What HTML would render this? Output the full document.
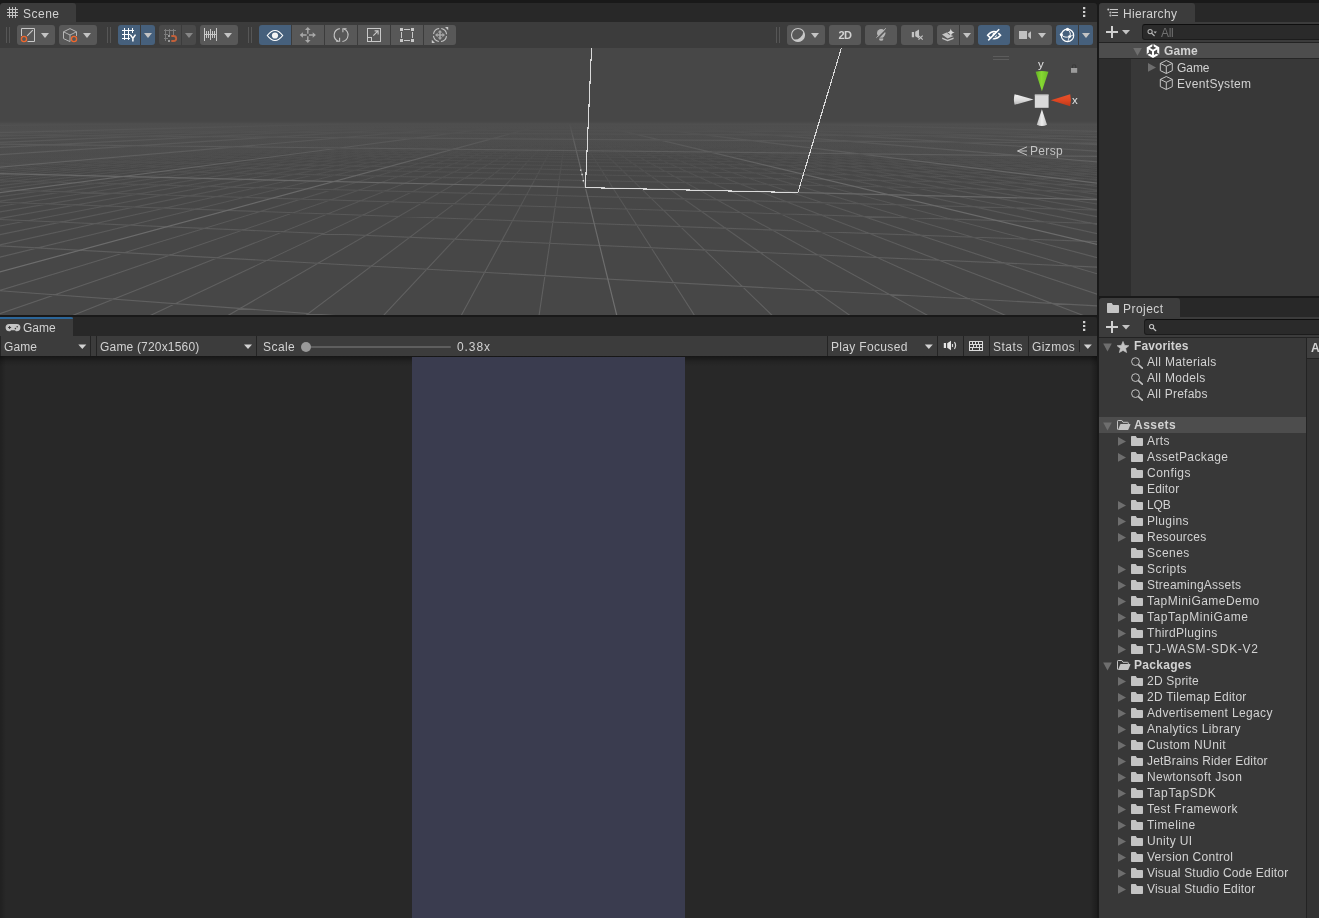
<!DOCTYPE html>
<html><head><meta charset="utf-8"><title>Unity</title>
<style>
*{box-sizing:border-box;margin:0;padding:0}
html,body{width:1319px;height:918px;overflow:hidden;background:#191919}
body{font-family:"Liberation Sans",sans-serif;font-size:12px;color:#d2d2d2;position:relative}
.abs,.p,.p>*,.t{position:absolute}
.p{overflow:hidden}
.tabbar{left:0;right:0;top:0;height:19px;background:#282828}
.tab{left:0;top:0;height:19px;background:#3c3c3c;border-radius:3px 3px 0 0}
.t{white-space:pre;line-height:16px;height:16px;will-change:transform}
.b{font-weight:bold}
.tb{background:#3c3c3c;left:0;right:0}
.btn{position:absolute;top:3px;height:20px;background:#585858;border-radius:3px}
.btn.on{background:#46607c}
.btn.l{border-radius:3px 0 0 3px}.btn.r{border-radius:0 3px 3px 0}.btn.m{border-radius:0}
.hd{position:absolute;width:1px;top:5px;height:16px;background:#565656}
svg{position:absolute;overflow:visible}
.row{position:absolute;left:0;height:16px}
.dots i{position:absolute;left:0;width:3px;height:2px;background:#c4c4c4}
</style></head>
<body>
<div class="p" style="left:0;top:3px;width:1097px;height:312px;border-radius:3px 3px 0 0">
<div class="tabbar"></div><div class="tab" style="width:76px"></div>
<svg width="12" height="12" viewBox="0 0 12 12" style="left:7px;top:4px" shape-rendering="crispEdges"><path d="M2.5 0v11M5.5 0v11M8.5 0v11M0 2.5h11M0 5.5h11M0 8.5h11" stroke="#c4c4c4" stroke-width="1" fill="none"/></svg>
<div class="t q " style="left:22.8px;top:3px;letter-spacing:0.491px;">Scene</div>
<svg width="4" height="12" viewBox="0 0 4 12" style="left:1083px;top:4px"><path d="M0 .1h2.3v2.2h-2.3zM0 3.9h2.3v2.2h-2.3zM0 7.8h2.3v2.2h-2.3z" fill="#d0d0d0"/></svg>
<div class="tb" style="top:19px;height:26px">
<div class="hd" style="left:6px"></div>
<div class="hd" style="left:9px"></div>
<div class="btn " style="left:17px;width:38px"></div>
<div class="btn " style="left:59px;width:38px"></div>
<div class="hd" style="left:107px"></div>
<div class="hd" style="left:110px"></div>
<div class="btn on l" style="left:118px;width:22px"></div>
<div class="btn on r" style="left:141px;width:14px"></div>
<div class="btn l" style="left:159px;width:22px;background:#4a4a4a"></div><div class="btn r" style="left:182px;width:14px;background:#4a4a4a"></div>
<div class="btn " style="left:200px;width:38px"></div>
<div class="hd" style="left:248px"></div>
<div class="hd" style="left:251px"></div>
<div class="btn on l" style="left:259px;width:32px"></div>
<div class="btn m" style="left:292px;width:32px"></div>
<div class="btn m" style="left:325px;width:32px"></div>
<div class="btn m" style="left:358px;width:32px"></div>
<div class="btn m" style="left:391px;width:32px"></div>
<div class="btn r" style="left:424px;width:32px"></div>
<div class="hd" style="left:776px"></div>
<div class="hd" style="left:779px"></div>
<div class="btn " style="left:787px;width:38px"></div>
<div class="btn " style="left:829px;width:32px"></div>
<div class="btn " style="left:865px;width:32px"></div>
<div class="btn " style="left:901px;width:32px"></div>
<div class="btn l" style="left:937px;width:22px"></div>
<div class="btn r" style="left:960px;width:14px"></div>
<div class="btn on" style="left:978px;width:32px"></div>
<div class="btn " style="left:1014px;width:38px"></div>
<div class="btn on l" style="left:1056px;width:22px"></div>
<div class="btn on r" style="left:1079px;width:14px"></div>
<div class="t b" style="left:829px;width:32px;top:4px;text-align:center;font-size:11px;letter-spacing:-.5px;color:#d2d2d2;line-height:18px;height:18px">2D</div>
<svg width="1097" height="25" viewBox="0 22 1097 25" style="left:0;top:0">
<path d="M21.5 36V28.5h13v13H27.5" stroke="#c8c8c8" fill="none"/>
<path d="M27.2 35.8L32.8 30.2" stroke="#c8c8c8" stroke-width="1.1" fill="none"/>
<circle cx="24" cy="39" r="2.6" stroke="#f0672d" stroke-width="1.3" fill="none"/>
<path d="M41 33h8l-4 5z" fill="#c4c4c4"/>
<path d="M63.5 31.8L70 28.6L76.5 31.8V36M63.5 31.8V38.6L70 41.6M63.5 31.8L70 35L76.5 31.8M70 35V41.6" stroke="#b4b4b4" stroke-width="1" fill="none" stroke-linejoin="round"/>
<circle cx="74" cy="39" r="2.6" stroke="#f0672d" stroke-width="1.3" fill="none"/>
<path d="M83 33h8l-4 5z" fill="#c4c4c4"/>
<g shape-rendering="crispEdges"><path d="M124.5 28v12M128.5 28v12M132.5 28v5M122 30.5h12M122 34.5h8M122 38.5h7.5" stroke="#fff" stroke-width="1" fill="none"/></g>
<path d="M130.3 34.6L132.9 38.4V41.6M135.5 34.6L132.9 38.4" stroke="#fff" stroke-width="1.5" fill="none"/>
<path d="M144 33h8l-4 5z" fill="#c4c4c4"/>
<g shape-rendering="crispEdges"><path d="M165.5 28.5v12M169.5 28.5v6M173.5 28.5v6M163.5 30.5h12M163.5 34.5h4M163.5 38.5h4" stroke="#7c7c7c" stroke-width="1" fill="none"/><path d="M168 35h2v2h-2zM168 40h2v2h-2z" fill="#9a9a9a"/></g>
<path d="M171.3 36h2.4a2.5 2.5 0 0 1 0 5h-2.4" stroke="#c2603a" stroke-width="1.8" fill="none"/>
<path d="M185 33h8l-4 5z" fill="#868686"/>
<g shape-rendering="crispEdges"><path d="M204.5 28v13M216.5 28v13M210.5 29v11M206.5 31v7M208.5 31v7M212.5 31v7M214.5 31v7M204 34.5h13" stroke="#c8c8c8" stroke-width="1" fill="none"/></g>
<path d="M224 33h8l-4 5z" fill="#c4c4c4"/>
<path d="M267.3 35.5Q275 25.5 282.7 35.5Q275 45.5 267.3 35.5Z" stroke="#fff" stroke-width="1.2" fill="none"/><circle cx="275" cy="35.5" r="3.1" fill="#f4f4f4"/>
<g fill="#a8a8a8"><path d="M307.8 26.9l2.8 3.2h-5.6zM307.8 43.1l2.8-3.2h-5.6zM299.7 35l3.2-2.8v5.6zM315.9 35l-3.2-2.8v5.6z"/><path d="M307.1 29.8h1.4v4h-1.4zM307.1 36.2h1.4v4h-1.4zM302.6 34.3h4v1.4h-4zM309 34.3h4v1.4h-4z"/></g>
<path d="M339.8 28.6A6.6 6.6 0 0 0 338.2 41.2M342.4 41.5A6.6 6.6 0 0 0 344 28.9" stroke="#c4c4c4" stroke-width="1.1" fill="none"/>
<path d="M336 41.3h3.6v-3.6M346.5 28.7h-3.6v3.6" stroke="#c4c4c4" stroke-width="1.1" fill="none"/>
<g shape-rendering="crispEdges"><rect x="367.5" y="28.5" width="13" height="13" stroke="#c8c8c8" fill="none"/><rect x="367.5" y="37.5" width="4" height="4" stroke="#c8c8c8" fill="none"/></g>
<path d="M373.3 35.7L377.8 31.2M374.6 30.9h3.5v3.5" stroke="#c8c8c8" stroke-width="1.1" fill="none"/>
<g shape-rendering="crispEdges" fill="#c8c8c8"><rect x="400" y="28" width="3" height="3"/><rect x="411" y="28" width="3" height="3"/><rect x="400" y="39" width="3" height="3"/><rect x="411" y="39" width="3" height="3"/><rect x="404" y="29" width="6" height="1"/><rect x="404" y="40" width="6" height="1"/><rect x="401" y="32" width="1" height="6"/><rect x="412" y="32" width="1" height="6"/></g>
<circle cx="440" cy="35" r="6.6" stroke="#c4c4c4" stroke-width="1.1" fill="none" stroke-dasharray="8.2 2.17" stroke-dashoffset="-1.1"/>
<g fill="#a6a6a6"><path d="M440 30l2.3 2.6h-1.5v1.6h1.6v-1.5l2.6 2.3l-2.6 2.3v-1.5h-1.6v1.6h1.5l-2.3 2.6l-2.3-2.6h1.5v-1.6h-1.6v1.5l-2.6-2.3l2.6-2.3v1.5h1.6v-1.6h-1.5z"/></g>
<path d="M445 27h3.2v3.2zM435 43h-3.2v-3.2z" fill="#c8c8c8"/>
<circle cx="798" cy="35" r="6.5" stroke="#c8c8c8" stroke-width="1.1" fill="none"/><path d="M803.4 31.4A6.5 6.5 0 0 1 793.2 39.4A8.6 8.6 0 0 0 803.4 31.4Z" fill="#c8c8c8"/>
<path d="M811 33h8l-4 5z" fill="#c4c4c4"/>
<circle cx="881.2" cy="33.2" r="4.2" fill="#b4b4b4"/><path d="M879.2 36.6h4v3a2 1.2 0 0 1-4 0z" fill="#b4b4b4"/><path d="M878.8 38.1h4.8" stroke="#585858" stroke-width=".7"/>
<path d="M877.4 38.6L886.6 29.4" stroke="#585858" stroke-width="1.5"/><path d="M876.4 37.7L885.9 28.3" stroke="#b4b4b4" stroke-width="1"/>
<path d="M911.8 32h2.3v5.2h-2.3zM915.2 31.8L919 29.6v8.8L915.2 36.2z" fill="#c4c4c4"/><path d="M918.5 35.6l4.2 4M922.7 35.6l-4.2 4" stroke="#c4c4c4" stroke-width="1.2"/>
<path d="M942 34.6L946.6 32.6L949 34.4L953.6 36L947.6 38.4Z" fill="#c4c4c4"/><path d="M942.2 37.6L947.6 39.8L953.6 37.6V38.9L947.6 41.2L942.2 38.9Z" fill="#c4c4c4"/>
<path d="M950.8 28.6Q951.2 32.2 954.6 32.6Q951.2 33 950.8 36.6Q950.4 33 947 32.6Q950.4 32.2 950.8 28.6Z" fill="#d6d6d6"/>
<path d="M963 33h8l-4 5z" fill="#c4c4c4"/>
<path d="M987.6 35.2Q994 27.6 1000.6 35.2Q994 42.4 987.6 35.2Z" stroke="#fff" stroke-width="1.5" fill="none"/><circle cx="994.6" cy="35" r="2.2" fill="#fff"/>
<path d="M989.4 41.2L1000.2 30" stroke="#46607c" stroke-width="1.6"/><path d="M988.2 40.4L999.2 29.2" stroke="#fff" stroke-width="1.5"/>
<path d="M1019 31h8v8h-8zM1028.2 33.6L1031 31.2v7.8L1028.2 36.6z" fill="#c0c0c0"/>
<path d="M1038 33h8l-4 5z" fill="#c4c4c4"/>
<circle cx="1067.5" cy="35.4" r="6.2" stroke="#fff" stroke-width="1.2" fill="none"/>
<path d="M1061.3 34.6C1063.4 37.4 1066.8 37.6 1069.6 36.6S1072.8 35 1073.7 34.4M1067.5 29.4C1070.6 31.4 1070.8 34.4 1069.6 36.6S1068.4 40 1067.8 41.6" stroke="#fff" stroke-width="1" fill="none"/>
<circle cx="1067.5" cy="29.4" r="1.6" fill="#fff"/><circle cx="1061.3" cy="34.6" r="1.5" fill="#fff"/><circle cx="1069.6" cy="36.6" r="1.4" fill="#fff"/>
<path d="M1082 33h8l-4 5z" fill="#c4c4c4"/>
</svg>
</div>
<div class="abs" style="left:0;top:45px;width:1097px;height:267px;background:#474747;overflow:hidden">
<svg width="1097" height="268" viewBox="0 0 1097 268" style="left:0;top:0">
<defs>
<linearGradient id="fm" gradientUnits="userSpaceOnUse" x1="0" y1="0" x2="0" y2="268"><stop offset="-0.0037" stop-color="#474747" stop-opacity="1.00"/><stop offset="0.2836" stop-color="#474747" stop-opacity="1.00"/><stop offset="0.3134" stop-color="#474747" stop-opacity="0.85"/><stop offset="0.3806" stop-color="#474747" stop-opacity="0.66"/><stop offset="0.4925" stop-color="#474747" stop-opacity="0.45"/><stop offset="0.6231" stop-color="#474747" stop-opacity="0.20"/><stop offset="0.7724" stop-color="#474747" stop-opacity="0.04"/><stop offset="0.8657" stop-color="#474747" stop-opacity="0.00"/><stop offset="0.9963" stop-color="#474747" stop-opacity="0.00"/></linearGradient>
<linearGradient id="fM" gradientUnits="userSpaceOnUse" x1="0" y1="0" x2="0" y2="268"><stop offset="-0.0037" stop-color="#474747" stop-opacity="1.00"/><stop offset="0.2799" stop-color="#474747" stop-opacity="1.00"/><stop offset="0.2985" stop-color="#474747" stop-opacity="0.80"/><stop offset="0.3358" stop-color="#474747" stop-opacity="0.40"/><stop offset="0.4179" stop-color="#474747" stop-opacity="0.12"/><stop offset="0.5299" stop-color="#474747" stop-opacity="0.00"/><stop offset="0.9963" stop-color="#474747" stop-opacity="0.00"/></linearGradient>
<linearGradient id="fS" gradientUnits="userSpaceOnUse" x1="0" y1="0" x2="0" y2="268"><stop offset="-0.0037" stop-color="#474747" stop-opacity="1.00"/><stop offset="0.2799" stop-color="#474747" stop-opacity="1.00"/><stop offset="0.2985" stop-color="#474747" stop-opacity="0.85"/><stop offset="0.3433" stop-color="#474747" stop-opacity="0.50"/><stop offset="0.4552" stop-color="#474747" stop-opacity="0.20"/><stop offset="0.9963" stop-color="#474747" stop-opacity="0.00"/></linearGradient>
</defs>
<path d="M-5.0 94.2L347.0 79.4M-5.0 95.0L353.8 79.4M-5.0 95.4L357.2 79.4M-5.0 95.9L360.6 79.4M-5.0 96.4L364.0 79.4M-5.0 96.8L367.5 79.5M-5.0 97.3L370.9 79.5M-5.0 97.9L374.4 79.5M-5.0 98.4L377.8 79.5M-5.0 99.0L381.3 79.5M-5.0 100.2L388.2 79.5M-5.0 100.8L391.7 79.5M-5.0 101.5L395.2 79.5M-5.0 102.2L398.8 79.6M-5.0 102.9L402.3 79.6M-5.0 103.6L405.8 79.6M-5.0 104.4L409.4 79.6M-5.0 105.3L412.9 79.6M-5.0 106.1L416.5 79.6M-5.0 108.0L423.6 79.6M-5.0 109.0L427.2 79.7M-5.0 110.1L430.8 79.7M-5.0 111.2L434.4 79.7M-5.0 112.4L438.0 79.7M-5.0 113.7L441.6 79.7M-5.0 115.0L445.3 79.7M-5.0 116.5L448.9 79.7M-5.0 118.0L452.6 79.7M-5.0 121.4L459.9 79.8M-5.0 123.2L463.6 79.8M-5.0 125.3L467.3 79.8M-5.0 127.4L471.0 79.8M-5.0 129.8L474.7 79.8M-5.0 132.3L478.4 79.8M-5.0 135.1L482.1 79.8M-5.0 138.2L485.9 79.9M-5.0 141.5L489.6 79.9M-5.0 149.3L497.2 79.9M-5.0 153.8L500.9 79.9M-5.0 159.0L504.7 79.9M-5.0 164.7L508.5 79.9M-5.0 171.3L512.3 80.0M-5.0 178.9L516.2 80.0M-5.0 187.7L520.0 80.0M-5.0 198.0L523.8 80.0M-5.0 210.4L527.7 80.0M-5.0 243.9L535.4 80.0M-5.0 267.4L539.3 80.0M56.2 274.0L543.2 80.1M136.5 274.0L547.1 80.1M216.8 274.0L551.0 80.1M297.1 274.0L555.0 80.1M377.4 274.0L558.9 80.1M457.7 274.0L562.8 80.1M538.1 274.0L566.8 80.1M698.7 274.0L574.7 80.2M779.0 274.0L578.7 80.2M859.3 274.0L582.7 80.2M939.6 274.0L586.7 80.2M1020.0 274.0L590.8 80.2M1100.3 274.0L594.8 80.2M1102.0 247.8L598.8 80.3M1102.0 227.2L602.9 80.3M1102.0 210.9L607.0 80.3M1102.0 186.7L615.1 80.3M1102.0 177.4L619.2 80.3M1102.0 169.5L623.4 80.3M1102.0 162.7L627.5 80.4M1102.0 156.8L631.6 80.4M1102.0 151.6L635.8 80.4M1102.0 147.0L639.9 80.4M1102.0 142.8L644.1 80.4M1102.0 139.1L648.3 80.4M1102.0 132.7L656.7 80.5M1102.0 130.0L660.9 80.5M1102.0 127.4L665.1 80.5M1102.0 125.1L669.4 80.5M1102.0 123.0L673.6 80.5M1102.0 121.0L677.9 80.5M1102.0 119.1L682.2 80.5M1102.0 117.4L686.5 80.6M1102.0 115.8L690.8 80.6M1102.0 112.9L699.4 80.6M1102.0 111.6L703.7 80.6M1102.0 110.4L708.1 80.6M1102.0 109.2L712.5 80.6M1102.0 108.1L716.8 80.7M1102.0 107.1L721.2 80.7M1102.0 106.1L725.6 80.7M1102.0 105.2L730.0 80.7M1102.0 104.3L734.5 80.7M1102.0 102.6L743.4 80.8M1102.0 101.9L747.8 80.8M1102.0 101.1L752.3 80.8M1102.0 100.4L756.8 80.8M1102.0 99.8L761.3 80.8M1102.0 99.1L765.8 80.8M1102.0 98.5L770.3 80.8M1102.0 97.9L774.9 80.9M1102.0 97.4L779.4 80.9M1102.0 96.3L788.6 80.9M1102.0 95.8L793.2 80.9M1102.0 95.3L797.8 80.9M1102.0 94.9L802.4 81.0M1102.0 94.4L807.1 81.0M1102.0 94.0L811.7 81.0M1102.0 93.6L816.4 81.0M1102.0 93.2L821.1 81.0M1102.0 92.8L825.8 81.0M-5.0 242.4L423.0 274.0M-5.0 197.6L1102.0 258.1M-5.0 171.3L1102.0 219.3M-5.0 154.0L1102.0 193.8M-5.0 141.7L1102.0 175.7M-5.0 132.6L1102.0 162.2M-5.0 119.9L1102.0 143.5M-5.0 115.3L1102.0 136.8M-5.0 111.5L1102.0 131.1M-5.0 108.3L1102.0 126.4M-5.0 105.5L1102.0 122.3M-5.0 103.1L1102.0 118.8M-5.0 101.0L1102.0 115.7M-5.0 99.2L1102.0 113.0M-5.0 97.6L1102.0 110.6M-5.0 94.8L1102.0 106.5M8.4 93.7L1102.0 104.8M29.3 92.9L1102.0 103.2M48.6 92.0L1102.0 101.7M66.7 91.3L1102.0 100.4M83.5 90.6L1102.0 99.2M99.2 89.9L1102.0 98.1M114.0 89.3L1102.0 97.0M127.8 88.7L1102.0 96.0M153.1 87.6L1102.0 94.3M164.7 87.1L1102.0 93.5M175.7 86.7L1102.0 92.8M186.0 86.2L1085.7 92.0M195.9 85.8L1067.8 91.2M205.2 85.4L1051.1 90.5M214.1 85.0L1035.4 89.9M222.6 84.7L1020.8 89.2M230.7 84.3L1007.0 88.7M245.7 83.7L981.9 87.6M252.8 83.4L970.3 87.1M259.5 83.1L959.4 86.6M266.0 82.9L949.1 86.2M272.2 82.6L939.3 85.8M278.1 82.3L930.0 85.4M283.8 82.1L921.2 85.0M289.3 81.9L912.7 84.7M294.6 81.6L904.7 84.3M304.6 81.2L889.7 83.7M309.3 81.0L882.7 83.4M313.9 80.8L876.0 83.1M318.3 80.6L869.6 82.8M322.5 80.5L863.4 82.6M326.6 80.3L857.5 82.3M330.6 80.1L851.8 82.1M334.4 80.0L846.4 81.9M338.2 79.8L841.1 81.6M345.3 79.5L831.2 81.2M348.7 79.4L826.5 81.0" stroke="#616161" stroke-width="1.1" fill="none"/>
<rect x="0" y="0" width="1097" height="268" fill="url(#fm)"/>
<path d="M-5.0 73.6L341.5 71.5M-5.0 73.8L351.8 71.5M-5.0 73.9L356.9 71.5M-5.0 74.0L362.1 71.5M-5.0 74.1L367.3 71.5M-5.0 74.2L372.5 71.5M-5.0 74.4L377.8 71.5M-5.0 74.5L383.0 71.5M-5.0 74.6L388.3 71.5M-5.0 74.8L393.6 71.5M-5.0 75.1L404.3 71.5M-5.0 75.3L409.6 71.5M-5.0 75.5L415.0 71.5M-5.0 75.7L420.4 71.5M-5.0 75.9L425.8 71.5M-5.0 76.2L431.3 71.5M-5.0 76.4L436.7 71.5M-5.0 76.7L442.2 71.5M-5.0 77.0L447.7 71.5M-5.0 77.8L458.8 71.5M-5.0 78.2L464.4 71.5M-5.0 78.7L470.0 71.5M-5.0 79.2L475.6 71.6M-5.0 79.8L481.2 71.6M-5.0 80.5L486.9 71.6M-5.0 81.3L492.6 71.6M-5.0 82.3L498.3 71.6M-5.0 83.4L504.0 71.6M-5.0 86.4L515.6 71.6M-5.0 88.4L521.4 71.6M-5.0 91.1L527.2 71.6M-5.0 94.6L533.0 71.6M-5.0 99.6L538.9 71.6M-5.0 107.0L544.8 71.6M-5.0 119.6L550.7 71.6M-5.0 145.2L556.7 71.6M-5.0 225.3L562.7 71.6M1102.0 197.6L574.7 71.6M1102.0 135.8L580.7 71.6M1102.0 114.3L586.8 71.6M1102.0 103.4L592.9 71.6M1102.0 96.8L599.0 71.6M1102.0 92.4L605.2 71.6M1102.0 89.3L611.3 71.6M1102.0 86.9L617.5 71.6M1102.0 85.0L623.8 71.6M1102.0 82.3L636.3 71.6M1102.0 81.3L642.6 71.6M1102.0 80.4L648.9 71.6M1102.0 79.7L655.3 71.6M1102.0 79.1L661.7 71.6M1102.0 78.5L668.1 71.7M1102.0 78.0L674.5 71.7M1102.0 77.6L681.0 71.7M1102.0 77.2L687.5 71.7M1102.0 76.5L700.6 71.7M1102.0 76.2L707.1 71.7M1102.0 76.0L713.8 71.7M1102.0 75.7L720.4 71.7M1102.0 75.5L727.1 71.7M1102.0 75.3L733.8 71.7M1102.0 75.1L740.5 71.7M1102.0 74.9L747.2 71.7M1102.0 74.7L754.0 71.7M1102.0 74.4L767.7 71.7M1102.0 74.3L774.6 71.7M1102.0 74.2L781.5 71.7M1102.0 74.1L788.4 71.7M1102.0 73.9L795.4 71.7M1102.0 73.8L802.4 71.7M1102.0 73.7L809.4 71.7M1102.0 73.6L816.4 71.7M1102.0 73.5L823.5 71.7M-5.0 96.1L1102.0 108.5M-5.0 87.1L1102.0 95.1M-5.0 82.7L1102.0 88.7M-5.0 80.1L1102.0 84.9M-5.0 78.4L1102.0 82.4M-5.0 77.2L1102.0 80.6M-5.0 76.3L1102.0 79.2M-5.0 75.6L1102.0 78.2M-5.0 75.0L1102.0 77.4M-5.0 74.2L1102.0 76.2M-5.0 73.9L1102.0 75.7M8.3 73.6L1102.0 75.3M39.1 73.4L1102.0 74.9M66.6 73.3L1102.0 74.6M91.5 73.1L1102.0 74.4M114.0 73.0L1102.0 74.1M134.4 72.8L1102.0 73.9M153.2 72.7L1102.0 73.7M186.1 72.5L1086.5 73.4M200.7 72.4L1060.1 73.2M214.2 72.3L1036.2 73.0M226.8 72.2L1014.5 72.9M238.5 72.2L994.7 72.8M249.4 72.1L976.6 72.7M259.6 72.0L960.0 72.6M269.2 72.0L944.7 72.5M278.2 71.9L930.5 72.4M294.7 71.8L905.2 72.2M302.3 71.8L893.8 72.1M309.4 71.7L883.1 72.1M316.2 71.7L873.2 72.0M322.6 71.6L863.8 72.0M328.7 71.6L855.0 71.9M334.5 71.6L846.7 71.8M340.1 71.5L838.9 71.8M345.4 71.5L831.5 71.7" stroke="#707070" stroke-width="1.2" fill="none"/>
<rect x="0" y="0" width="1097" height="268" fill="url(#fM)"/>
<path d="M-5.0 70.4L340.9 70.2M-5.0 70.4L346.1 70.2M-5.0 70.4L351.2 70.2M-5.0 70.5L356.4 70.2M-5.0 70.5L361.5 70.2M-5.0 70.5L366.7 70.2M-5.0 70.5L372.0 70.2M-5.0 70.5L377.2 70.2M-5.0 70.5L382.5 70.2M-5.0 70.5L387.7 70.2M-5.0 70.5L393.0 70.2M-5.0 70.6L398.4 70.2M-5.0 70.6L403.7 70.2M-5.0 70.6L409.1 70.2M-5.0 70.6L414.5 70.2M-5.0 70.6L419.9 70.2M-5.0 70.7L425.3 70.2M-5.0 70.7L430.8 70.2M-5.0 70.7L436.2 70.2M-5.0 70.7L441.7 70.2M-5.0 70.8L447.2 70.2M-5.0 70.8L452.8 70.2M-5.0 70.8L458.3 70.2M-5.0 70.9L463.9 70.2M-5.0 70.9L469.5 70.2M-5.0 71.0L475.1 70.2M-5.0 71.0L480.8 70.2M-5.0 71.1L486.5 70.2M-5.0 71.2L492.2 70.2M-5.0 71.3L497.9 70.2M-5.0 71.4L503.6 70.2M-5.0 71.5L509.4 70.2M-5.0 71.7L515.2 70.2M-5.0 71.9L521.0 70.2M-5.0 72.2L526.8 70.2M-5.0 72.5L532.7 70.2M-5.0 73.0L538.5 70.2M-5.0 73.7L544.5 70.2M-5.0 74.9L550.4 70.2M-5.0 77.4L556.3 70.2M-5.0 84.7L562.3 70.2M618.4 274.0L568.3 70.2M1102.0 83.5L574.4 70.2M1102.0 76.8L580.4 70.2M1102.0 74.6L586.5 70.2M1102.0 73.5L592.6 70.2M1102.0 72.8L598.7 70.2M1102.0 72.3L604.9 70.2M1102.0 72.0L611.1 70.2M1102.0 71.8L617.3 70.2M1102.0 71.6L623.5 70.2M1102.0 71.4L629.8 70.2M1102.0 71.3L636.0 70.2M1102.0 71.2L642.4 70.2M1102.0 71.1L648.7 70.2M1102.0 71.0L655.1 70.2M1102.0 71.0L661.5 70.2M1102.0 70.9L667.9 70.2M1102.0 70.9L674.3 70.2M1102.0 70.8L680.8 70.2M1102.0 70.8L687.3 70.2M1102.0 70.8L693.8 70.2M1102.0 70.7L700.4 70.2M1102.0 70.7L707.0 70.2M1102.0 70.7L713.6 70.2M1102.0 70.6L720.3 70.2M1102.0 70.6L726.9 70.2M1102.0 70.6L733.6 70.2M1102.0 70.6L740.4 70.2M1102.0 70.6L747.1 70.2M1102.0 70.5L753.9 70.2M1102.0 70.5L760.8 70.2M1102.0 70.5L767.6 70.2M1102.0 70.5L774.5 70.2M1102.0 70.5L781.4 70.2M1102.0 70.5L788.4 70.2M1102.0 70.5L795.3 70.2M1102.0 70.5L802.3 70.2M1102.0 70.4L809.4 70.2M1102.0 70.4L816.5 70.2M1102.0 70.4L823.6 70.2M1102.0 70.4L830.7 70.2M-5.0 125.5L1102.0 151.8M-5.0 74.6L1102.0 76.7M-5.0 72.4L1102.0 73.5M-5.0 71.7L1102.0 72.4M-5.0 71.3L1102.0 71.8M-5.0 71.0L1102.0 71.5M-5.0 70.9L1102.0 71.3M-5.0 70.8L1102.0 71.1M-5.0 70.7L1102.0 71.0M-5.0 70.6L1102.0 70.9M-5.0 70.6L1102.0 70.8M-5.0 70.5L1102.0 70.7M-5.0 70.5L1102.0 70.7M-5.0 70.5L1102.0 70.6M14.9 70.4L1102.0 70.6M45.0 70.4L1102.0 70.6M72.0 70.4L1102.0 70.5M96.3 70.4L1102.0 70.5M118.4 70.4L1102.0 70.5M138.4 70.3L1102.0 70.5M156.8 70.3L1102.0 70.4M173.7 70.3L1102.0 70.4M189.2 70.3L1081.0 70.4M203.6 70.3L1055.1 70.4M216.9 70.3L1031.6 70.4M229.3 70.3L1010.4 70.4M240.8 70.3L991.0 70.3M251.6 70.3L973.2 70.3M261.6 70.3L956.8 70.3M271.1 70.3L941.8 70.3M280.0 70.3L927.8 70.3M288.4 70.3L914.9 70.3M296.3 70.2L902.8 70.3M303.8 70.2L891.6 70.3M310.8 70.2L881.1 70.3M317.5 70.2L871.2 70.3M323.9 70.2L862.0 70.3M330.0 70.2L853.3 70.3M335.7 70.2L845.1 70.3M341.2 70.2L837.4 70.2M346.4 70.2L830.1 70.2" stroke="#707070" stroke-width="1.2" fill="none"/>
<rect x="0" y="0" width="1097" height="268" fill="url(#fS)"/>
<linearGradient id="hz" gradientUnits="userSpaceOnUse" x1="0" y1="73.0" x2="0" y2="113.0"><stop offset="0" stop-color="#fff" stop-opacity="0"/><stop offset=".08" stop-color="#fff" stop-opacity=".04"/><stop offset="1" stop-color="#fff" stop-opacity="0"/></linearGradient><rect x="0" y="73.0" width="1097" height="40" fill="url(#hz)"/>
<path d="M620.4 -655.3L585.4 139.6L797.9 144.6L1071.5 -765.8" stroke="#dadada" stroke-width="1.1" fill="none" shape-rendering="crispEdges"/>
<path d="M580 121.4h1.4v1.4h-1.4zM581.4 125.8h1.4v1.4h-1.4zM582.6 132.0h1.4v1.6h-1.4z" fill="#e0e0e0"/>
</svg>
<svg width="1097" height="268" viewBox="0 48 1097 268" style="left:0;top:0">
<defs><linearGradient id="gl" x1="0" y1="0" x2="0" y2="1"><stop offset="0" stop-color="#f2f2f2"/><stop offset=".55" stop-color="#dcdcdc"/><stop offset="1" stop-color="#b4b4b4"/></linearGradient><linearGradient id="gb" x1="0" y1="0" x2="1" y2="0"><stop offset="0" stop-color="#bdbdbd"/><stop offset=".5" stop-color="#ececec"/><stop offset="1" stop-color="#c4c4c4"/></linearGradient><linearGradient id="gg" x1="0" y1="0" x2="1" y2="0"><stop offset="0" stop-color="#63b024"/><stop offset=".45" stop-color="#86d832"/><stop offset="1" stop-color="#6dbb28"/></linearGradient><linearGradient id="gr" x1="0" y1="0" x2="0" y2="1"><stop offset="0" stop-color="#e8522a"/><stop offset=".5" stop-color="#e04722"/><stop offset="1" stop-color="#b93a1c"/></linearGradient></defs>
<path d="M993 56.5h16M993 59.5h16" stroke="#5c5c5c" stroke-width="1" shape-rendering="crispEdges"/>
<path d="M1072.4 68v-1.6a1.7 1.7 0 0 1 3.4 0V68" stroke="#3a3a3a" stroke-width="1.1" fill="none"/><rect x="1071" y="68" width="6.2" height="4.8" fill="#9c9c9c"/>
<path d="M1035.6 71.8Q1042 70.4 1048.4 71.8L1041.9 91.2Z" fill="url(#gg)"/>
<path d="M1014.6 94.2Q1013.2 99.5 1014.6 104.8L1033.6 99.6Z" fill="url(#gl)"/>
<path d="M1070.2 94.2Q1071.8 100.2 1070.2 106.2L1050.8 100.2Z" fill="url(#gr)"/>
<path d="M1036.8 124.8Q1041.9 127.4 1047 124.8L1041.9 109.2Z" fill="url(#gb)"/>
<rect x="1034.8" y="94.6" width="13.8" height="13.2" fill="#dadada"/><rect x="1034.8" y="94.6" width="13.8" height="1" fill="#c2c2c2"/>
<path d="M1027 146.8L1017.6 151L1027 155.2M1017.6 151H1027" stroke="#c4c4c4" stroke-width="1" fill="none"/>
</svg>
<div class="t" style="left:1037.6px;top:7.6px;color:#e0e0e0;font-size:11.5px">y</div>
<div class="t" style="left:1072.4px;top:44.4px;color:#e0e0e0;font-size:11.5px">x</div>
<div class="t q " style="left:1029.6px;top:95px;letter-spacing:0.336px;color:#c4c4c4">Persp</div>
</div>
</div>
<div class="p" style="left:1099px;top:3px;width:220px;height:293px;border-radius:3px 0 0 0;background:#383838">
<div class="tabbar"></div><div class="tab" style="width:96px"></div>
<div class="t q " style="left:24.1px;top:3px;letter-spacing:0.318px;">Hierarchy</div>
<div class="tb" style="top:19px;height:20px"></div>
<div class="abs" style="left:43px;top:21px;width:200px;height:16px;background:#2a2a2a;border:1px solid #1c1c1c;border-top-color:#0e0e0e;border-radius:3px"></div>
<div class="t q " style="left:61.6px;top:22px;letter-spacing:-0.324px;color:#707070">All</div>
<div class="abs" style="left:0;top:39px;width:220px;height:1px;background:#232323"></div>
<div class="abs" style="left:0;top:40px;width:220px;height:15px;background:#4d4d4d"></div>
<div class="abs" style="left:0;top:55px;width:220px;height:1px;background:#262626"></div>
<div class="abs" style="left:0;top:56px;width:32px;height:237px;background:#2d2d2d"></div>
<div class="t q b" style="left:65.0px;top:41px;letter-spacing:0.149px;line-height:15px">Game</div>
<div class="t q " style="left:77.9px;top:57px;letter-spacing:-0.063px;">Game</div>
<div class="t q " style="left:77.9px;top:73px;letter-spacing:0.340px;">EventSystem</div>
<svg width="220" height="293" viewBox="1099 3 220 293" style="left:0;top:0">
<g shape-rendering="crispEdges" fill="#c8c8c8"><rect x="1110" y="9" width="8" height="1"/><rect x="1112" y="12" width="6" height="1"/><rect x="1112" y="15" width="6" height="1"/></g><g fill="#c8c8c8"><circle cx="1108.3" cy="9.5" r="1.05"/><circle cx="1110.4" cy="12.5" r="1.05"/><circle cx="1110.4" cy="15.5" r="1.05"/><rect x="1110.1" y="12.5" width=".6" height="3" fill="#777"/></g>
<path d="M1106 32h12M1112 26v12" stroke="#d0d0d0" stroke-width="2" shape-rendering="crispEdges"/>
<path d="M1122 30h8l-4 4.5z" fill="#c4c4c4"/>
<circle cx="1150.1" cy="31.6" r="2.1" stroke="#b4b4b4" stroke-width="1.05" fill="none"/><path d="M1151.7 33.3L1154.3 35.7" stroke="#b4b4b4" stroke-width="1.2" stroke-linecap="round"/>
<path d="M1153.5 31.5h3.4l-1.7 2z" fill="#b4b4b4"/>
<path d="M1133.2 48h8.6l-4.3 7.8z" fill="#6e6e6e"/>
<path d="M1153.0 44.9L1158.2 47.8V53.8L1153.0 56.699999999999996L1147.8 53.8V47.8Z" stroke="#fff" stroke-width="2.1" fill="none" stroke-linejoin="miter"/><path d="M1148.2 48.0L1153.0 50.9L1157.8 48.0M1153.0 50.9V56.8" stroke="#fff" stroke-width="2" fill="none"/><path d="M1153.0 43.8V47.4" stroke="#444" stroke-width="1.2"/><path d="M1147.0 54.4L1149.8 52.8M1159.0 54.4L1156.2 52.8" stroke="#4d4d4d" stroke-width="1.1"/>
<path d="M1148 63l8 4.4l-8 4.4z" fill="#6e6e6e"/>
<path d="M1166.3 60.5L1172.3 63.4V70.6L1166.3 73.5L1160.3 70.6V63.4ZM1160.3 63.4L1166.3 66.3L1172.3 63.4M1166.3 66.3V73.5" stroke="#c4c4c4" stroke-width="1" fill="none" stroke-linejoin="round"/>
<path d="M1166.3 76.5L1172.3 79.4V86.6L1166.3 89.5L1160.3 86.6V79.4ZM1160.3 79.4L1166.3 82.3L1172.3 79.4M1166.3 82.3V89.5" stroke="#c4c4c4" stroke-width="1" fill="none" stroke-linejoin="round"/>
</svg>
</div>
<div class="p" style="left:1099px;top:298px;width:220px;height:620px;border-radius:3px 0 0 0;background:#383838">
<div class="tabbar"></div><div class="tab" style="width:81px"></div>
<div class="t q " style="left:23.8px;top:3px;letter-spacing:0.458px;">Project</div>
<div class="tb" style="top:19px;height:20px"></div>
<div class="abs" style="left:45px;top:21px;width:200px;height:16px;background:#2a2a2a;border:1px solid #1c1c1c;border-top-color:#0e0e0e;border-radius:3px"></div>
<div class="abs" style="left:0;top:39px;width:220px;height:1px;background:#232323"></div>
<div class="abs" style="left:207px;top:40px;width:1px;height:580px;background:#232323"></div>
<div class="abs" style="left:208px;top:40px;width:12px;height:20px;background:#3f3f3f"></div>
<div class="abs" style="left:208px;top:60px;width:12px;height:1px;background:#232323"></div>
<div class="abs" style="left:208px;top:61px;width:12px;height:559px;background:#333"></div>
<div class="t q b" style="left:211.7px;top:42px;letter-spacing:0.628px;">A</div>
<div class="abs" style="left:0;top:119px;width:207px;height:16px;background:#4d4d4d"></div>
<div class="t q b" style="left:34.7px;top:40px;letter-spacing:0.130px;">Favorites</div>
<div class="t q " style="left:47.7px;top:56px;letter-spacing:0.320px;">All Materials</div>
<div class="t q " style="left:47.7px;top:72px;letter-spacing:0.316px;">All Models</div>
<div class="t q " style="left:47.7px;top:88px;letter-spacing:0.246px;">All Prefabs</div>
<div class="t q b" style="left:34.7px;top:119px;letter-spacing:0.465px;">Assets</div>
<div class="t q " style="left:47.7px;top:135px;letter-spacing:0.420px;">Arts</div>
<div class="t q " style="left:47.7px;top:151px;letter-spacing:0.389px;">AssetPackage</div>
<div class="t q " style="left:47.7px;top:167px;letter-spacing:0.468px;">Configs</div>
<div class="t q " style="left:47.7px;top:183px;letter-spacing:0.168px;">Editor</div>
<div class="t q " style="left:47.7px;top:199px;letter-spacing:-0.112px;">LQB</div>
<div class="t q " style="left:47.7px;top:215px;letter-spacing:0.340px;">Plugins</div>
<div class="t q " style="left:47.7px;top:231px;letter-spacing:0.230px;">Resources</div>
<div class="t q " style="left:47.7px;top:247px;letter-spacing:0.453px;">Scenes</div>
<div class="t q " style="left:47.7px;top:263px;letter-spacing:0.469px;">Scripts</div>
<div class="t q " style="left:47.7px;top:279px;letter-spacing:0.235px;">StreamingAssets</div>
<div class="t q " style="left:47.7px;top:295px;letter-spacing:0.446px;">TapMiniGameDemo</div>
<div class="t q " style="left:47.7px;top:311px;letter-spacing:0.585px;">TapTapMiniGame</div>
<div class="t q " style="left:47.7px;top:327px;letter-spacing:0.317px;">ThirdPlugins</div>
<div class="t q " style="left:47.7px;top:343px;letter-spacing:0.725px;">TJ-WASM-SDK-V2</div>
<div class="t q b" style="left:34.7px;top:359px;letter-spacing:0.287px;">Packages</div>
<div class="t q " style="left:47.7px;top:375px;letter-spacing:0.208px;">2D Sprite</div>
<div class="t q " style="left:47.7px;top:391px;letter-spacing:0.245px;">2D Tilemap Editor</div>
<div class="t q " style="left:47.7px;top:407px;letter-spacing:0.351px;">Advertisement Legacy</div>
<div class="t q " style="left:47.7px;top:423px;letter-spacing:0.348px;">Analytics Library</div>
<div class="t q " style="left:47.7px;top:439px;letter-spacing:0.347px;">Custom NUnit</div>
<div class="t q " style="left:47.7px;top:455px;letter-spacing:0.180px;">JetBrains Rider Editor</div>
<div class="t q " style="left:47.7px;top:471px;letter-spacing:0.442px;">Newtonsoft Json</div>
<div class="t q " style="left:47.7px;top:487px;letter-spacing:0.679px;">TapTapSDK</div>
<div class="t q " style="left:47.7px;top:503px;letter-spacing:0.403px;">Test Framework</div>
<div class="t q " style="left:47.7px;top:519px;letter-spacing:0.483px;">Timeline</div>
<div class="t q " style="left:47.7px;top:535px;letter-spacing:0.346px;">Unity UI</div>
<div class="t q " style="left:47.7px;top:551px;letter-spacing:0.282px;">Version Control</div>
<div class="t q " style="left:47.7px;top:567px;letter-spacing:0.194px;">Visual Studio Code Editor</div>
<div class="t q " style="left:47.7px;top:583px;letter-spacing:0.194px;">Visual Studio Editor</div>
<svg width="220" height="620" viewBox="1099 298 220 620" style="left:0;top:0">
<path d="M1107 303.8a.8 .8 0 0 1 .8-.8h4l1.2 2h5.2a.8 .8 0 0 1 .8 .8v6.4a.8 .8 0 0 1-.8 .8h-10.4a.8 .8 0 0 1-.8-.8z" fill="#c4c4c4"/>
<path d="M1106 327h12M1112 321v12" stroke="#d0d0d0" stroke-width="2" shape-rendering="crispEdges"/>
<path d="M1122 325h8l-4 4.5z" fill="#c4c4c4"/>
<circle cx="1151.6" cy="326.6" r="2.1" stroke="#c4c4c4" stroke-width="1.05" fill="none"/><path d="M1153.2 328.3L1155.8 330.7" stroke="#c4c4c4" stroke-width="1.2" stroke-linecap="round"/>
<path d="M1103.2 343.6h8.6l-4.3 7.8z" fill="#6e6e6e"/>
<path d="M1123.00 341.40L1124.64 345.34L1128.90 345.68L1125.65 348.46L1126.64 352.62L1123.00 350.39L1119.36 352.62L1120.35 348.46L1117.10 345.68L1121.36 345.34Z" fill="#c4c4c4" stroke="#c4c4c4" stroke-width=".6" stroke-linejoin="round"/>
<circle cx="1135.5" cy="361.6" r="3.9" stroke="#c4c4c4" stroke-width="1" fill="none"/><path d="M1138.7 364.8L1142.3 368.20000000000005" stroke="#c4c4c4" stroke-width="1.6" stroke-linecap="round"/>
<circle cx="1135.5" cy="377.6" r="3.9" stroke="#c4c4c4" stroke-width="1" fill="none"/><path d="M1138.7 380.8L1142.3 384.20000000000005" stroke="#c4c4c4" stroke-width="1.6" stroke-linecap="round"/>
<circle cx="1135.5" cy="393.6" r="3.9" stroke="#c4c4c4" stroke-width="1" fill="none"/><path d="M1138.7 396.8L1142.3 400.20000000000005" stroke="#c4c4c4" stroke-width="1.6" stroke-linecap="round"/>
<path d="M1103.2 422.6h8.6l-4.3 7.8z" fill="#6e6e6e"/>
<path d="M1117.5 429.5V421.2a.7 .7 0 0 1 .7-.7h3.6l1.2 1.8h4.6a.7 .7 0 0 1 .7 .7v1.2" stroke="#c4c4c4" stroke-width="1" fill="none"/><path d="M1118 429.9l2.2-5.4a.6 .6 0 0 1 .6-.4h9.2a.4 .4 0 0 1 .4 .6l-2 4.8a.7 .7 0 0 1-.6 .4z" fill="#c4c4c4"/>
<path d="M1118 437l8 4.4l-8 4.4z" fill="#6e6e6e"/>
<path d="M1131 436.8a.8 .8 0 0 1 .8-.8h4l1.2 2h5.2a.8 .8 0 0 1 .8 .8v6.4a.8 .8 0 0 1-.8 .8h-10.4a.8 .8 0 0 1-.8-.8z" fill="#c4c4c4"/>
<path d="M1118 453l8 4.4l-8 4.4z" fill="#6e6e6e"/>
<path d="M1131 452.8a.8 .8 0 0 1 .8-.8h4l1.2 2h5.2a.8 .8 0 0 1 .8 .8v6.4a.8 .8 0 0 1-.8 .8h-10.4a.8 .8 0 0 1-.8-.8z" fill="#c4c4c4"/>
<path d="M1131 468.8a.8 .8 0 0 1 .8-.8h4l1.2 2h5.2a.8 .8 0 0 1 .8 .8v6.4a.8 .8 0 0 1-.8 .8h-10.4a.8 .8 0 0 1-.8-.8z" fill="#c4c4c4"/>
<path d="M1131 484.8a.8 .8 0 0 1 .8-.8h4l1.2 2h5.2a.8 .8 0 0 1 .8 .8v6.4a.8 .8 0 0 1-.8 .8h-10.4a.8 .8 0 0 1-.8-.8z" fill="#c4c4c4"/>
<path d="M1118 501l8 4.4l-8 4.4z" fill="#6e6e6e"/>
<path d="M1131 500.8a.8 .8 0 0 1 .8-.8h4l1.2 2h5.2a.8 .8 0 0 1 .8 .8v6.4a.8 .8 0 0 1-.8 .8h-10.4a.8 .8 0 0 1-.8-.8z" fill="#c4c4c4"/>
<path d="M1118 517l8 4.4l-8 4.4z" fill="#6e6e6e"/>
<path d="M1131 516.8a.8 .8 0 0 1 .8-.8h4l1.2 2h5.2a.8 .8 0 0 1 .8 .8v6.4a.8 .8 0 0 1-.8 .8h-10.4a.8 .8 0 0 1-.8-.8z" fill="#c4c4c4"/>
<path d="M1118 533l8 4.4l-8 4.4z" fill="#6e6e6e"/>
<path d="M1131 532.8a.8 .8 0 0 1 .8-.8h4l1.2 2h5.2a.8 .8 0 0 1 .8 .8v6.4a.8 .8 0 0 1-.8 .8h-10.4a.8 .8 0 0 1-.8-.8z" fill="#c4c4c4"/>
<path d="M1131 548.8a.8 .8 0 0 1 .8-.8h4l1.2 2h5.2a.8 .8 0 0 1 .8 .8v6.4a.8 .8 0 0 1-.8 .8h-10.4a.8 .8 0 0 1-.8-.8z" fill="#c4c4c4"/>
<path d="M1118 565l8 4.4l-8 4.4z" fill="#6e6e6e"/>
<path d="M1131 564.8a.8 .8 0 0 1 .8-.8h4l1.2 2h5.2a.8 .8 0 0 1 .8 .8v6.4a.8 .8 0 0 1-.8 .8h-10.4a.8 .8 0 0 1-.8-.8z" fill="#c4c4c4"/>
<path d="M1118 581l8 4.4l-8 4.4z" fill="#6e6e6e"/>
<path d="M1131 580.8a.8 .8 0 0 1 .8-.8h4l1.2 2h5.2a.8 .8 0 0 1 .8 .8v6.4a.8 .8 0 0 1-.8 .8h-10.4a.8 .8 0 0 1-.8-.8z" fill="#c4c4c4"/>
<path d="M1118 597l8 4.4l-8 4.4z" fill="#6e6e6e"/>
<path d="M1131 596.8a.8 .8 0 0 1 .8-.8h4l1.2 2h5.2a.8 .8 0 0 1 .8 .8v6.4a.8 .8 0 0 1-.8 .8h-10.4a.8 .8 0 0 1-.8-.8z" fill="#c4c4c4"/>
<path d="M1118 613l8 4.4l-8 4.4z" fill="#6e6e6e"/>
<path d="M1131 612.8a.8 .8 0 0 1 .8-.8h4l1.2 2h5.2a.8 .8 0 0 1 .8 .8v6.4a.8 .8 0 0 1-.8 .8h-10.4a.8 .8 0 0 1-.8-.8z" fill="#c4c4c4"/>
<path d="M1118 629l8 4.4l-8 4.4z" fill="#6e6e6e"/>
<path d="M1131 628.8a.8 .8 0 0 1 .8-.8h4l1.2 2h5.2a.8 .8 0 0 1 .8 .8v6.4a.8 .8 0 0 1-.8 .8h-10.4a.8 .8 0 0 1-.8-.8z" fill="#c4c4c4"/>
<path d="M1118 645l8 4.4l-8 4.4z" fill="#6e6e6e"/>
<path d="M1131 644.8a.8 .8 0 0 1 .8-.8h4l1.2 2h5.2a.8 .8 0 0 1 .8 .8v6.4a.8 .8 0 0 1-.8 .8h-10.4a.8 .8 0 0 1-.8-.8z" fill="#c4c4c4"/>
<path d="M1103.2 662.6h8.6l-4.3 7.8z" fill="#6e6e6e"/>
<path d="M1117.5 669.5V661.2a.7 .7 0 0 1 .7-.7h3.6l1.2 1.8h4.6a.7 .7 0 0 1 .7 .7v1.2" stroke="#c4c4c4" stroke-width="1" fill="none"/><path d="M1118 669.9l2.2-5.4a.6 .6 0 0 1 .6-.4h9.2a.4 .4 0 0 1 .4 .6l-2 4.8a.7 .7 0 0 1-.6 .4z" fill="#c4c4c4"/>
<path d="M1118 677l8 4.4l-8 4.4z" fill="#6e6e6e"/>
<path d="M1131 676.8a.8 .8 0 0 1 .8-.8h4l1.2 2h5.2a.8 .8 0 0 1 .8 .8v6.4a.8 .8 0 0 1-.8 .8h-10.4a.8 .8 0 0 1-.8-.8z" fill="#c4c4c4"/>
<path d="M1118 693l8 4.4l-8 4.4z" fill="#6e6e6e"/>
<path d="M1131 692.8a.8 .8 0 0 1 .8-.8h4l1.2 2h5.2a.8 .8 0 0 1 .8 .8v6.4a.8 .8 0 0 1-.8 .8h-10.4a.8 .8 0 0 1-.8-.8z" fill="#c4c4c4"/>
<path d="M1118 709l8 4.4l-8 4.4z" fill="#6e6e6e"/>
<path d="M1131 708.8a.8 .8 0 0 1 .8-.8h4l1.2 2h5.2a.8 .8 0 0 1 .8 .8v6.4a.8 .8 0 0 1-.8 .8h-10.4a.8 .8 0 0 1-.8-.8z" fill="#c4c4c4"/>
<path d="M1118 725l8 4.4l-8 4.4z" fill="#6e6e6e"/>
<path d="M1131 724.8a.8 .8 0 0 1 .8-.8h4l1.2 2h5.2a.8 .8 0 0 1 .8 .8v6.4a.8 .8 0 0 1-.8 .8h-10.4a.8 .8 0 0 1-.8-.8z" fill="#c4c4c4"/>
<path d="M1118 741l8 4.4l-8 4.4z" fill="#6e6e6e"/>
<path d="M1131 740.8a.8 .8 0 0 1 .8-.8h4l1.2 2h5.2a.8 .8 0 0 1 .8 .8v6.4a.8 .8 0 0 1-.8 .8h-10.4a.8 .8 0 0 1-.8-.8z" fill="#c4c4c4"/>
<path d="M1118 757l8 4.4l-8 4.4z" fill="#6e6e6e"/>
<path d="M1131 756.8a.8 .8 0 0 1 .8-.8h4l1.2 2h5.2a.8 .8 0 0 1 .8 .8v6.4a.8 .8 0 0 1-.8 .8h-10.4a.8 .8 0 0 1-.8-.8z" fill="#c4c4c4"/>
<path d="M1118 773l8 4.4l-8 4.4z" fill="#6e6e6e"/>
<path d="M1131 772.8a.8 .8 0 0 1 .8-.8h4l1.2 2h5.2a.8 .8 0 0 1 .8 .8v6.4a.8 .8 0 0 1-.8 .8h-10.4a.8 .8 0 0 1-.8-.8z" fill="#c4c4c4"/>
<path d="M1118 789l8 4.4l-8 4.4z" fill="#6e6e6e"/>
<path d="M1131 788.8a.8 .8 0 0 1 .8-.8h4l1.2 2h5.2a.8 .8 0 0 1 .8 .8v6.4a.8 .8 0 0 1-.8 .8h-10.4a.8 .8 0 0 1-.8-.8z" fill="#c4c4c4"/>
<path d="M1118 805l8 4.4l-8 4.4z" fill="#6e6e6e"/>
<path d="M1131 804.8a.8 .8 0 0 1 .8-.8h4l1.2 2h5.2a.8 .8 0 0 1 .8 .8v6.4a.8 .8 0 0 1-.8 .8h-10.4a.8 .8 0 0 1-.8-.8z" fill="#c4c4c4"/>
<path d="M1118 821l8 4.4l-8 4.4z" fill="#6e6e6e"/>
<path d="M1131 820.8a.8 .8 0 0 1 .8-.8h4l1.2 2h5.2a.8 .8 0 0 1 .8 .8v6.4a.8 .8 0 0 1-.8 .8h-10.4a.8 .8 0 0 1-.8-.8z" fill="#c4c4c4"/>
<path d="M1118 837l8 4.4l-8 4.4z" fill="#6e6e6e"/>
<path d="M1131 836.8a.8 .8 0 0 1 .8-.8h4l1.2 2h5.2a.8 .8 0 0 1 .8 .8v6.4a.8 .8 0 0 1-.8 .8h-10.4a.8 .8 0 0 1-.8-.8z" fill="#c4c4c4"/>
<path d="M1118 853l8 4.4l-8 4.4z" fill="#6e6e6e"/>
<path d="M1131 852.8a.8 .8 0 0 1 .8-.8h4l1.2 2h5.2a.8 .8 0 0 1 .8 .8v6.4a.8 .8 0 0 1-.8 .8h-10.4a.8 .8 0 0 1-.8-.8z" fill="#c4c4c4"/>
<path d="M1118 869l8 4.4l-8 4.4z" fill="#6e6e6e"/>
<path d="M1131 868.8a.8 .8 0 0 1 .8-.8h4l1.2 2h5.2a.8 .8 0 0 1 .8 .8v6.4a.8 .8 0 0 1-.8 .8h-10.4a.8 .8 0 0 1-.8-.8z" fill="#c4c4c4"/>
<path d="M1118 885l8 4.4l-8 4.4z" fill="#6e6e6e"/>
<path d="M1131 884.8a.8 .8 0 0 1 .8-.8h4l1.2 2h5.2a.8 .8 0 0 1 .8 .8v6.4a.8 .8 0 0 1-.8 .8h-10.4a.8 .8 0 0 1-.8-.8z" fill="#c4c4c4"/>
</svg>
</div>
<div class="p" style="left:0;top:317px;width:1097px;height:601px;background:#212121">
<div class="tabbar" style="border-radius:0 3px 0 0"></div><div class="tab" style="width:73px;border-radius:0"></div>
<div class="abs" style="left:0;top:0;width:73px;height:2px;background:#2c6699;border-radius:0 2px 0 0"></div>
<div class="t q " style="left:23.0px;top:3px;letter-spacing:-0.026px;">Game</div>
<svg width="4" height="12" viewBox="0 0 4 12" style="left:1083px;top:4px"><path d="M0 .1h2.3v2.2h-2.3zM0 3.9h2.3v2.2h-2.3zM0 7.8h2.3v2.2h-2.3z" fill="#d0d0d0"/></svg>
<div class="tb" style="top:19px;height:20px"></div>
<div class="abs" style="left:0;top:19px;width:1px;height:20px;background:#242424"></div>
<div class="abs" style="left:90px;top:19px;width:1px;height:20px;background:#242424"></div>
<div class="abs" style="left:96px;top:19px;width:1px;height:20px;background:#242424"></div>
<div class="abs" style="left:256px;top:19px;width:1px;height:20px;background:#242424"></div>
<div class="abs" style="left:827px;top:19px;width:1px;height:20px;background:#242424"></div>
<div class="abs" style="left:937px;top:19px;width:1px;height:20px;background:#242424"></div>
<div class="abs" style="left:963px;top:19px;width:1px;height:20px;background:#242424"></div>
<div class="abs" style="left:989px;top:19px;width:1px;height:20px;background:#242424"></div>
<div class="abs" style="left:1028px;top:19px;width:1px;height:20px;background:#242424"></div>
<div class="abs" style="left:1079px;top:23px;width:1px;height:12px;background:#242424"></div>
<div class="t q " style="left:3.6px;top:22px;letter-spacing:0.070px;">Game</div>
<div class="t q " style="left:99.9px;top:22px;letter-spacing:0.184px;">Game (720x1560)</div>
<div class="t q " style="left:262.6px;top:22px;letter-spacing:0.442px;">Scale</div>
<div class="t q " style="left:456.5px;top:22px;letter-spacing:0.933px;">0.38x</div>
<div class="t q " style="left:830.6px;top:22px;letter-spacing:0.327px;">Play Focused</div>
<div class="t q " style="left:992.7px;top:22px;letter-spacing:0.511px;">Stats</div>
<div class="t q " style="left:1031.5px;top:22px;letter-spacing:0.424px;">Gizmos</div>
<div class="abs" style="left:307px;top:29px;width:144px;height:2px;background:#5e5e5e;border-radius:1px"></div>
<div class="abs" style="left:301px;top:25px;width:10px;height:10px;background:#999;border-radius:5px"></div>
<div class="abs" style="left:0;top:39px;width:1097px;height:562px;background:#282828"></div>
<div class="abs" style="left:0;top:39px;width:1097px;height:10px;background:linear-gradient(rgba(0,0,0,.45),rgba(0,0,0,.12) 55%,rgba(0,0,0,0))"></div>
<div class="abs" style="left:0;top:39px;width:6px;height:562px;background:linear-gradient(90deg,rgba(0,0,0,.2),rgba(0,0,0,0))"></div>
<div class="abs" style="left:1090px;top:39px;width:7px;height:562px;background:linear-gradient(90deg,rgba(0,0,0,0),rgba(0,0,0,.28))"></div>
<div class="abs" style="left:412px;top:40px;width:273px;height:561px;background:#3a3c4f"></div>
<svg width="1097" height="601" viewBox="0 317 1097 601" style="left:0;top:0">
<path d="M9.2 324h7.6a3.6 3.6 0 0 1 0 7.2h-.9l-1-1h-3.8l-1 1h-.9a3.6 3.6 0 0 1 0-7.2z" fill="#c4c4c4"/>
<path d="M9.6 326v3M8.1 327.5h3" stroke="#3c3c3c" stroke-width="1"/><circle cx="15.4" cy="328.6" r=".8" fill="#3c3c3c"/><circle cx="17.2" cy="326.8" r=".8" fill="#3c3c3c"/>
<path d="M78.3 344.5h8l-4 4.5z" fill="#d2d2d2"/>
<path d="M244 344.5h8l-4 4.5z" fill="#d2d2d2"/>
<path d="M924.8 344.5h8l-4 4.5z" fill="#d2d2d2"/>
<path d="M1083.8 344.5h8l-4 4.5z" fill="#d2d2d2"/>
<path d="M943.8 343h2.2v5h-2.2zM947.2 343.2l3.8-2.4v9.4l-3.8-2.4z" fill="#e4e4e4"/><path d="M952.5 344v3M954.4 342.2q2.4 3.3 0 6.7" stroke="#d8d8d8" stroke-width="1.2" fill="none"/>
<rect x="969" y="341" width="14" height="10" rx=".6" fill="#dcdcdc"/>
<g fill="#3c3c3c" shape-rendering="crispEdges"><path d="M970 342h2v2h-2zM973 342h2v2h-2zM976 342h2v2h-2zM979 342h3v2h-3zM970 345h3v2h-3zM974 345h2v2h-2zM977 345h2v2h-2zM980 345h2v2h-2zM970 348h2v2h-2zM973 348h6v2h-6zM980 348h2v2h-2z"/></g>
</svg>
</div>
</body></html>
